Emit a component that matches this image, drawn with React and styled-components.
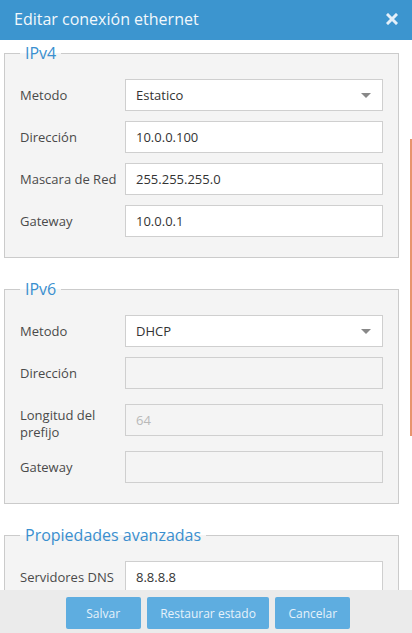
import React from "react";
import styled, { createGlobalStyle } from "styled-components";

const Global = createGlobalStyle`
  * { box-sizing: border-box; }
  html, body { margin: 0; padding: 0; background: #fff; }
  body { font-family: "Open Sans", "Noto Sans", sans-serif; }
`;

const Dialog = styled.div`
  position: relative;
  width: 412px;
  height: 633px;
  display: flex;
  flex-direction: column;
  overflow: hidden;
  background: #fff;
`;

const Header = styled.div`
  flex: 0 0 40px;
  background: #3c95cf;
  display: flex;
  align-items: center;
  justify-content: space-between;
  padding: 0 14px 2px 14px;
`;

const Title = styled.h1`
  margin: 0;
  font-size: 16px;
  font-weight: 400;
  color: #f2f8fc;
  line-height: 24px;
`;

const Close = styled.button`
  border: 0;
  background: none;
  padding: 0;
  width: 12px;
  height: 12px;
  display: flex;
  cursor: pointer;
`;

const Body = styled.div`
  flex: 1 1 auto;
  overflow: hidden;
  padding: 1px 13px 0 4px;
`;

const Fieldset = styled.fieldset`
  margin: 0 0 19px 0;
  padding: 14px 15px 10px 15px;
  border: 1px solid #cbcbcb;
  background: #f4f4f4;
  min-width: 0;
`;

const Legend = styled.legend`
  padding: 0 5px;
  font-size: 16px;
  line-height: 24px;
  color: #3a8fcf;
`;

const Row = styled.div`
  display: flex;
  align-items: flex-start;
  margin-bottom: 10px;
`;

const Label = styled.label`
  flex: 0 0 105px;
  font-size: 13px;
  line-height: 17px;
  color: #4a4a4a;
  padding-top: 8px;
  padding-right: 6px;
`;

const Input = styled.input`
  flex: 1 1 auto;
  min-width: 0;
  height: 32px;
  margin-top: ${(p) => (p.$offset ? "5px" : "0")};
  border: 1px solid #cfcfcf;
  background: ${(p) => (p.disabled ? "#f4f4f4" : "#fff")};
  padding: 0 10px;
  font-family: inherit;
  font-size: 13px;
  color: #333;
  outline: none;
  &:disabled { color: #b9b9b9; }
`;

const SelectBox = styled.div`
  flex: 1 1 auto;
  height: 32px;
  border: 1px solid #cfcfcf;
  background: #fff;
  display: flex;
  align-items: center;
  justify-content: space-between;
  padding: 0 11px 0 10px;
  font-size: 13px;
  color: #333;
`;

const Caret = styled.span`
  width: 0;
  height: 0;
  border-left: 5px solid transparent;
  border-right: 5px solid transparent;
  border-top: 5px solid #888;
`;

const Footer = styled.div`
  flex: 0 0 43px;
  background: #ebebeb;
  display: flex;
  justify-content: center;
  align-items: flex-start;
  gap: 6.5px;
  padding: 7px 0 0 4px;
`;

const Button = styled.button`
  height: 32px;
  min-width: 75px;
  padding: 0 13px;
  border: 0;
  border-radius: 2px;
  background: #5eade0;
  color: #e6f2fb;
  font-family: inherit;
  font-size: 12px;
  cursor: pointer;
`;

const ScrollThumb = styled.div`
  position: absolute;
  right: 0;
  top: 139px;
  width: 2px;
  height: 297px;
  background: #e8946c;
`;

function Field({ label, value, disabled, tall }) {
  return (
    <Row>
      <Label>{label}</Label>
      <Input readOnly defaultValue={value} disabled={disabled} $offset={tall} />
    </Row>
  );
}

function SelectField({ label, value }) {
  return (
    <Row>
      <Label>{label}</Label>
      <SelectBox>
        <span>{value}</span>
        <Caret />
      </SelectBox>
    </Row>
  );
}

export default function App() {
  return (
    <Dialog>
      <Global />
      <Header>
        <Title>Editar conexión ethernet</Title>
        <Close aria-label="Cerrar">
          <svg width="12" height="12" viewBox="0 0 12 12">
            <path d="M2 2 L10 10 M10 2 L2 10" stroke="#e4f0fa" strokeWidth="3" strokeLinecap="square" />
          </svg>
        </Close>
      </Header>
      <Body>
        <Fieldset>
          <Legend>IPv4</Legend>
          <SelectField label="Metodo" value="Estatico" />
          <Field label="Dirección" value="10.0.0.100" />
          <Field label="Mascara de Red" value="255.255.255.0" />
          <Field label="Gateway" value="10.0.0.1" />
        </Fieldset>
        <Fieldset>
          <Legend>IPv6</Legend>
          <SelectField label="Metodo" value="DHCP" />
          <Field label="Dirección" value="" disabled />
          <Field label="Longitud del prefijo" value="64" disabled tall />
          <Field label="Gateway" value="" disabled />
        </Fieldset>
        <Fieldset>
          <Legend>Propiedades avanzadas</Legend>
          <Field label="Servidores DNS" value="8.8.8.8" />
        </Fieldset>
      </Body>
      <Footer>
        <Button>Salvar</Button>
        <Button>Restaurar estado</Button>
        <Button>Cancelar</Button>
      </Footer>
      <ScrollThumb />
    </Dialog>
  );
}
